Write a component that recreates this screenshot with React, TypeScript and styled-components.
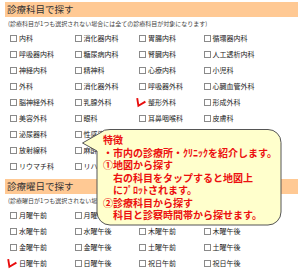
import React from "react";
import styled, { createGlobalStyle } from "styled-components";

const GlobalStyle = createGlobalStyle`
  html, body { margin: 0; padding: 0; background: #fff; }
  body {
    font-family: "Noto Sans CJK JP", "Noto Sans", sans-serif;
    width: 300px;
    height: 278px;
    overflow: hidden;
  }
`;

const Page = styled.div`
  position: relative;
  width: 300px;
  height: 278px;
  padding: 2px 2px 0 5px;
  box-sizing: border-box;
`;

const SectionBar = styled.h2<{ $gap?: number }>`
  margin: ${(p) => p.$gap ?? 0}px 0 0 0;
  height: 15px;
  background: #ffc994;
  color: #333;
  font-size: 9.5px;
  font-weight: normal;
  line-height: 15px;
  padding-left: 2px;
  white-space: nowrap;
`;

const Note = styled.p`
  margin: 2px 0 0 0;
  height: 10px;
  font-size: 6px;
  line-height: 10px;
  color: #444;
  padding-left: 3px;
  white-space: nowrap;
`;

const Grid = styled.ul`
  list-style: none;
  margin: 1px 0 0 0;
  padding: 0 0 0 5px;
  display: grid;
  grid-template-columns: repeat(4, 64.5px);
  grid-auto-rows: 16px;
`;

const Item = styled.li`
  position: relative;
  display: flex;
  align-items: center;
  gap: 2px;
  font-size: 7px;
  color: #222;
  white-space: nowrap;
`;

const Box = styled.span<{ $hidden?: boolean }>`
  width: 5px;
  height: 5px;
  border: 1px solid ${(p) => (p.$hidden ? "transparent" : "#8a8a8a")};
  background: #fff;
  flex: none;
`;

const Tick = styled.svg`
  position: absolute;
  left: -3px;
  top: 3px;
  width: 12px;
  height: 12px;
  overflow: visible;
`;

const Bubble = styled.div`
  position: absolute;
  left: 82px;
  top: 129px;
  width: 200px;
  height: 97px;
`;

const BubbleShape = styled.svg`
  position: absolute;
  inset: 0;
  width: 200px;
  height: 97px;
`;

const BubbleText = styled.div`
  position: relative;
  padding: 5px 0 0 21px;
  color: #ec0f0f;
  font-size: 10px;
  font-weight: bold;
  line-height: 12.5px;
  white-space: pre;
`;

const subjects = [
  "内科", "消化器内科", "胃腸内科", "循環器内科",
  "呼吸器内科", "糖尿病内科", "腎臓内科", "人工透析内科",
  "神経内科", "精神科", "心療内科", "小児科",
  "外科", "消化器外科", "呼吸器外科", "心臓血管外科",
  "脳神経外科", "乳腺外科", "整形外科", "形成外科",
  "美容外科", "眼科", "耳鼻咽喉科", "皮膚科",
  "泌尿器科", "性感染症内科", "", "",
  "放射線科", "麻酔科", "", "",
  "リウマチ科", "リハビリテーション科", "", "",
];

const days = [
  "月曜午前", "月曜午後", "", "",
  "水曜午前", "水曜午後", "木曜午前", "木曜午後",
  "金曜午前", "金曜午後", "土曜午前", "土曜午後",
  "日曜午前", "日曜午後", "祝日午前", "祝日午後",
];

const checked = new Set(["整形外科", "日曜午前"]);

function Option({ label }: { label: string }) {
  if (!label) return <Item />;
  const on = checked.has(label);
  return (
    <Item>
      <Box $hidden={on} />
      {label}
      {on && (
        <Tick viewBox="0 0 12 12">
          <path
            d="M1.2 1.2 L2.4 8.8 L9.4 4.6"
            fill="none"
            stroke="#e80c0c"
            strokeWidth="1.9"
            strokeLinejoin="miter"
          />
        </Tick>
      )}
    </Item>
  );
}

const bubbleLines = [
  "特徴",
  "・市内の診療所・ｸﾘﾆｯｸを紹介します。",
  "①地図から探す",
  "　右の科目をタップすると地図上",
  "　にﾌﾟﾛｯﾄされます。",
  "②診療科目から探す",
  "　科目と診察時間帯から探せます。",
];

export default function App() {
  return (
    <>
      <GlobalStyle />
      <Page>
        <SectionBar>診療科目で探す</SectionBar>
        <Note>(診療科目が1つも選択されない場合には全ての診療科目が対象になります)</Note>
        <Grid>
          {subjects.map((s, i) => (
            <Option key={i} label={s} />
          ))}
        </Grid>
        <SectionBar $gap={5}>診療曜日で探す</SectionBar>
        <Note>(診療曜日が1つも選択されない場合には全ての曜日が対象になります)</Note>
        <Grid>
          {days.map((d, i) => (
            <Option key={i} label={d} />
          ))}
        </Grid>
        <Bubble>
          <BubbleShape viewBox="0 0 200 97">
            <path
              d="M28 0.5 H186 A13 13 0 0 1 199 13.5 V83 A13 13 0 0 1 186 96 H28 A13 13 0 0 1 15 83 V22 L0.5 14 L18 4 A13 13 0 0 1 28 0.5 Z"
              fill="#ffffcc"
              stroke="#555"
              strokeWidth="1"
            />
          </BubbleShape>
          <BubbleText>{bubbleLines.join("\n")}</BubbleText>
        </Bubble>
      </Page>
    </>
  );
}
